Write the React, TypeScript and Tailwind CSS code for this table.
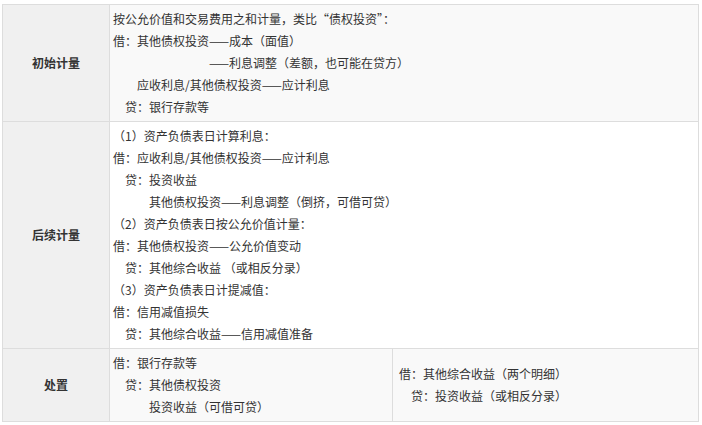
import React from "react";

type Line = { text: string; indent?: number };

const rows: { label: string; bg: string; lines: Line[] }[] = [
  {
    label: "初始计量",
    bg: "bg-[#f9f9f9]",
    lines: [
      { text: "按公允价值和交易费用之和计量，类比“债权投资”：" },
      { text: "借：其他债权投资——成本（面值）" },
      { text: "——利息调整（差额，也可能在贷方）", indent: 96 },
      { text: "应收利息/其他债权投资——应计利息", indent: 24 },
      { text: "贷：银行存款等", indent: 12 },
    ],
  },
  {
    label: "后续计量",
    bg: "bg-white",
    lines: [
      { text: "（1）资产负债表日计算利息：" },
      { text: "借：应收利息/其他债权投资——应计利息" },
      { text: "贷：投资收益", indent: 12 },
      { text: "其他债权投资——利息调整（倒挤，可借可贷）", indent: 36 },
      { text: "（2）资产负债表日按公允价值计量：" },
      { text: "借：其他债权投资——公允价值变动" },
      { text: "贷：其他综合收益 （或相反分录）", indent: 12 },
      { text: "（3）资产负债表日计提减值：" },
      { text: "借：信用减值损失" },
      { text: "贷：其他综合收益——信用减值准备", indent: 12 },
    ],
  },
];

const indentClass: Record<number, string> = {
  0: "pl-0",
  12: "pl-[12px]",
  24: "pl-[24px]",
  36: "pl-[36px]",
  96: "pl-[96px]",
};

function Lines({ lines }: { lines: Line[] }) {
  return (
    <>
      {lines.map((l, i) => (
        <div key={i} className={`whitespace-pre ${indentClass[l.indent ?? 0]}`}>
          {l.text}
        </div>
      ))}
    </>
  );
}

export default function App() {
  return (
    <div
      className="min-h-screen bg-white pt-[4px] pl-[2px] text-[12px] leading-[22px] text-[#333]"
      style={{ fontFamily: '"Noto Sans CJK SC", "Noto Sans", sans-serif' }}
    >
      <table className="w-[697px] table-fixed border-collapse">
        <colgroup>
          <col className="w-[107px]" />
          <col className="w-[283px]" />
          <col />
        </colgroup>
        <tbody>
          {rows.map((r) => (
            <tr key={r.label}>
              <td className="border border-[#dddddd] bg-[#f0f0f0] text-center align-middle font-bold">
                {r.label}
              </td>
              <td colSpan={2} className={`border border-[#dddddd] ${r.bg} px-[3px] py-[3px] align-middle`}>
                <Lines lines={r.lines} />
              </td>
            </tr>
          ))}
          <tr>
            <td className="border border-[#dddddd] bg-[#f0f0f0] text-center align-middle font-bold">
              处置
            </td>
            <td className="border border-[#dddddd] bg-[#f9f9f9] px-[3px] py-[3px] align-middle">
              <Lines
                lines={[
                  { text: "借：银行存款等" },
                  { text: "贷：其他债权投资", indent: 12 },
                  { text: "投资收益（可借可贷）", indent: 36 },
                ]}
              />
            </td>
            <td className="border border-[#dddddd] bg-[#f9f9f9] pl-[6px] pr-[3px] py-[3px] align-middle">
              <Lines
                lines={[
                  { text: "借：其他综合收益（两个明细）" },
                  { text: "贷：投资收益（或相反分录）", indent: 12 },
                ]}
              />
            </td>
          </tr>
        </tbody>
      </table>
    </div>
  );
}
